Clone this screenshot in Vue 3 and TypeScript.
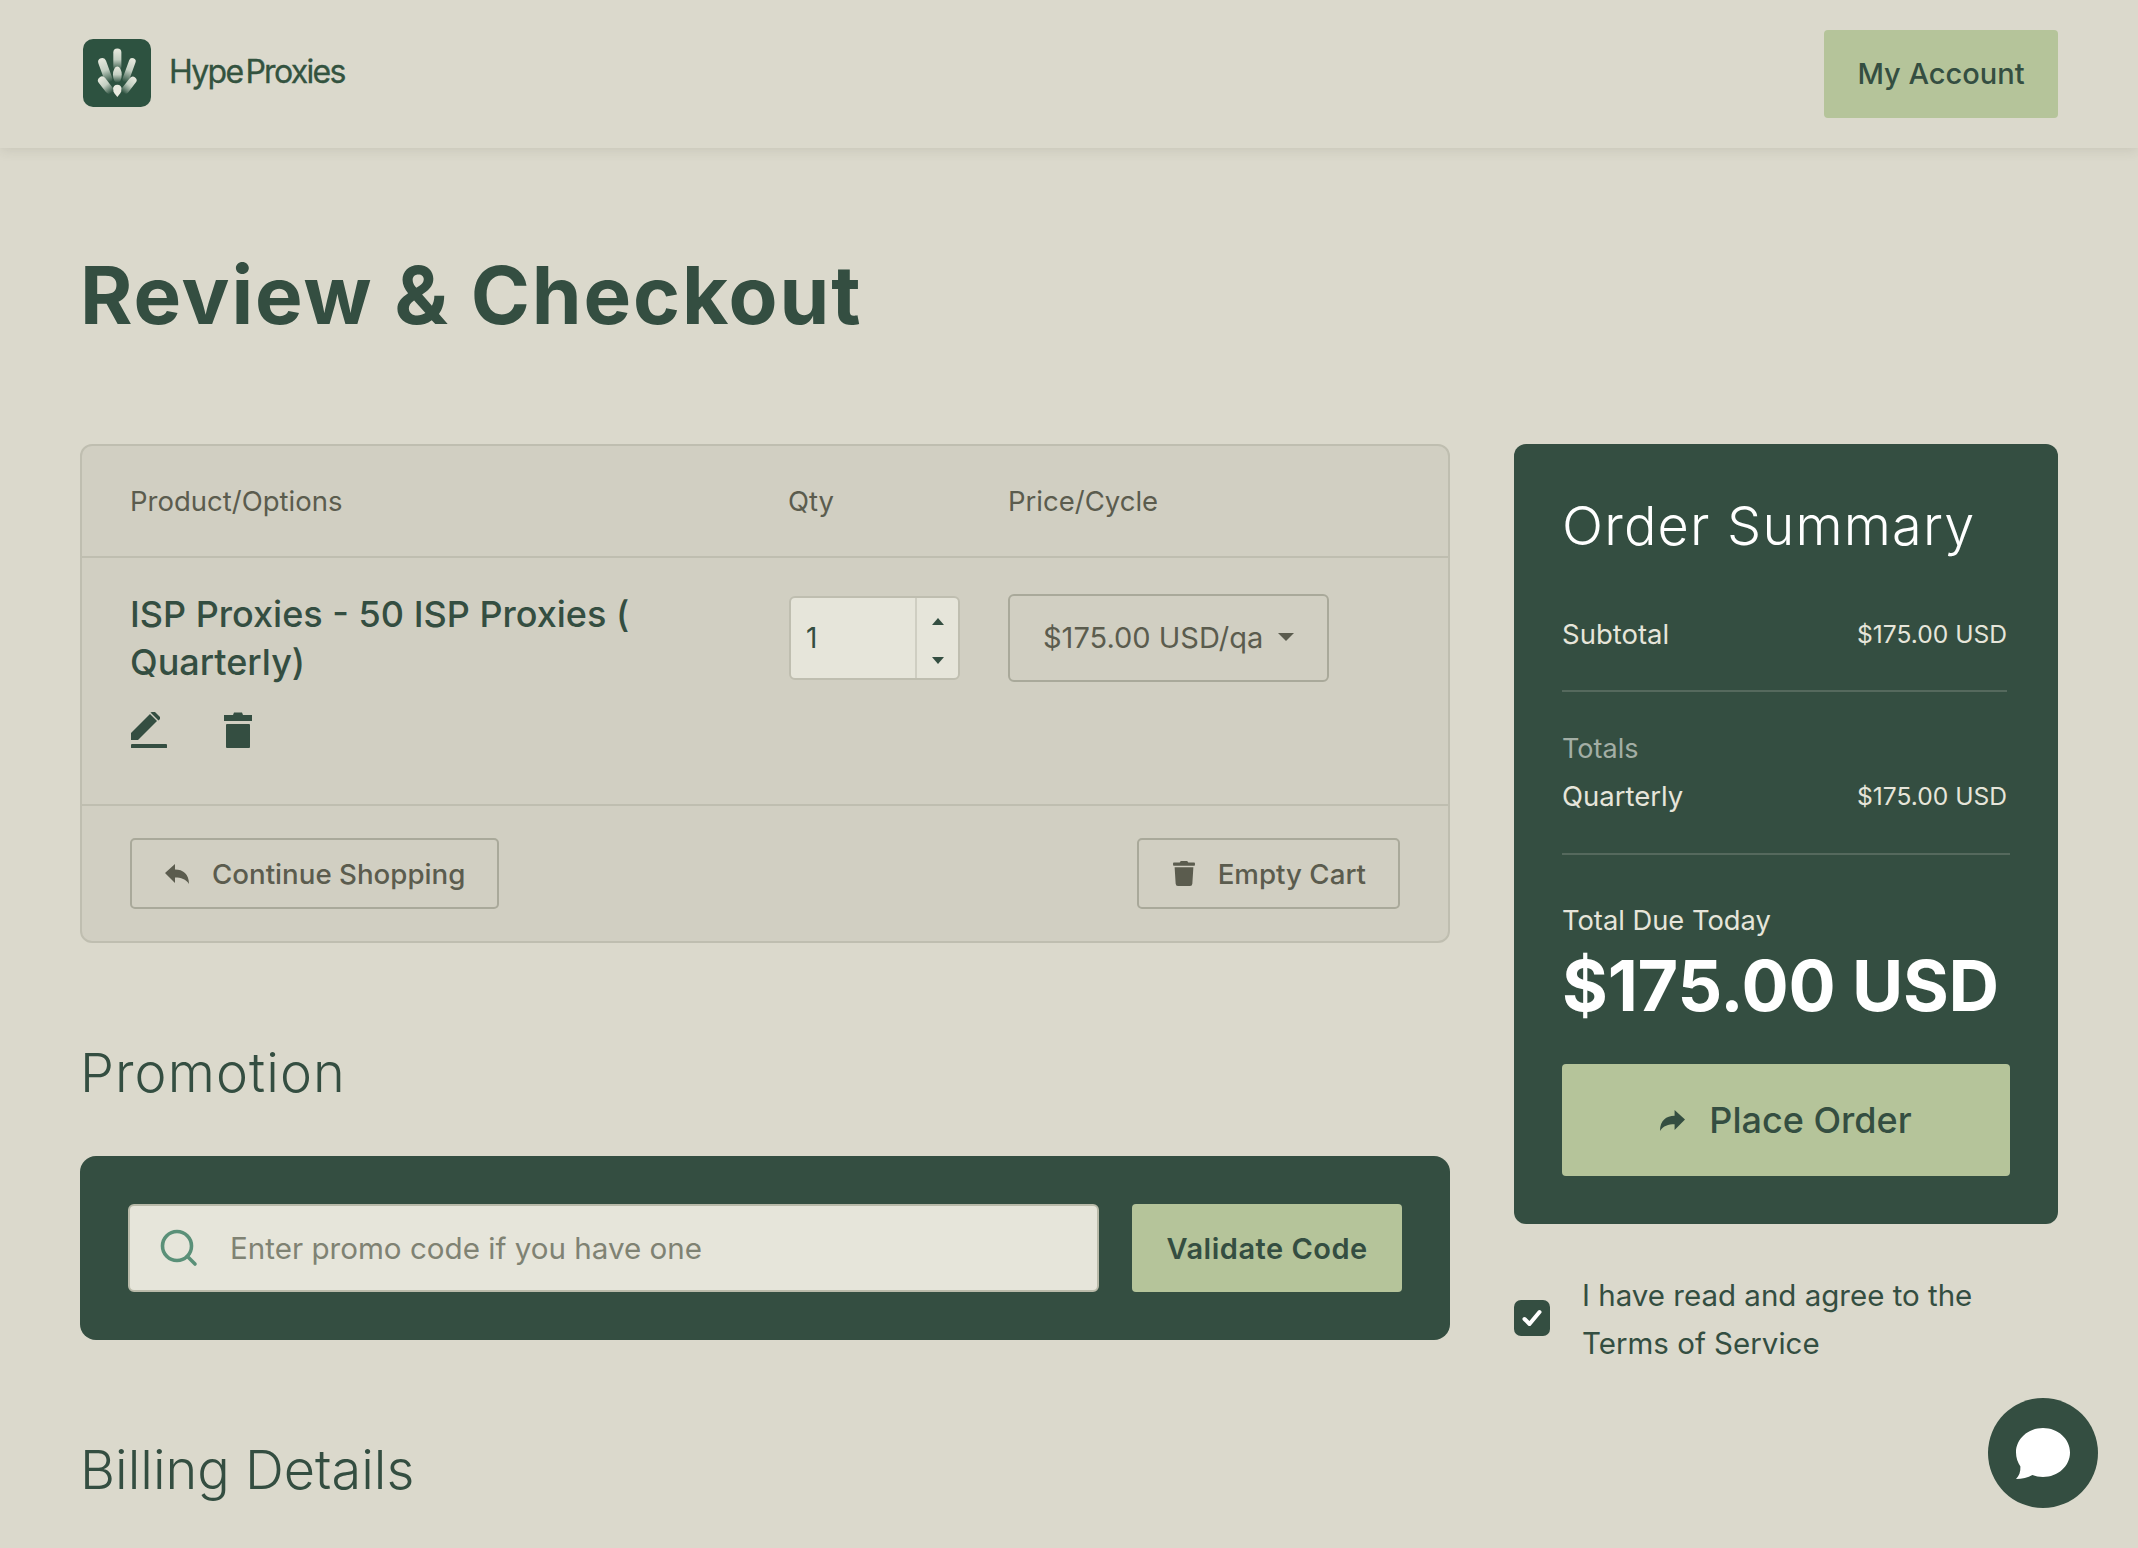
<template>
  <div class="page">
    <header class="topbar">
      <a class="brand" href="#">
        <svg class="brand-mark" viewBox="0 0 202 202">
          <defs>
            <linearGradient id="petal" x1="0" y1="0" x2="0" y2="1">
              <stop offset="0" stop-color="#e8eadf" />
              <stop offset="0.5" stop-color="#c3cfc2" />
              <stop offset="1" stop-color="#2d5240" />
            </linearGradient>
          </defs>
          <rect width="202" height="202" rx="30" fill="#2d5240" />
          <rect x="90" y="28" width="24" height="66" rx="12" fill="url(#petal)" />
          <ellipse cx="102" cy="106" rx="13" ry="24" fill="url(#petal)" />
          <path d="M102 136c8 0 13 6 13 13 0 9-8 17-13 23-5-6-13-14-13-23 0-7 5-13 13-13z" fill="#e8eadf" />
          <rect x="54" y="55" width="24" height="76" rx="12" fill="url(#petal)" transform="rotate(-20 66 93)" />
          <rect x="127" y="55" width="20" height="76" rx="10" fill="url(#petal)" transform="rotate(20 137 93)" />
          <rect x="55" y="108" width="24" height="58" rx="12" fill="url(#petal)" transform="rotate(-38 67 137)" />
          <rect x="126" y="108" width="22" height="58" rx="11" fill="url(#petal)" transform="rotate(38 137 137)" />
        </svg>
        <span class="brand-name">Hype<span class="brand-second">Proxies</span></span>
      </a>
      <button class="account-btn" type="button">My Account</button>
    </header>

    <main class="content">
      <h1 class="page-title">Review &amp; Checkout</h1>

      <div class="checkout">
        <div class="left-col">
          <section class="cart">
            <div class="cart-row cart-head">
              <span>Product/Options</span>
              <span>Qty</span>
              <span>Price/Cycle</span>
            </div>
            <div class="cart-row cart-item">
              <div class="item-info">
                <div class="item-name">ISP Proxies - 50 ISP Proxies (<br />Quarterly)</div>
                <div class="item-actions">
                  <svg class="icon-edit" viewBox="0 0 36 36" fill="#344e41">
                    <path d="M0 21 19 2l7 7L7 28H0z" />
                    <path d="M21 0h3l5 5v2l-1.500 1.500-8-8z" />
                    <rect y="32" width="36" height="4.300" rx="1" />
                  </svg>
                  <svg class="icon-bin" viewBox="0 0 28 36" fill="#344e41">
                    <path d="M0 3h9l1-2.500h8l1 2.500h9v6H0z" />
                    <rect x="2" y="12" width="24" height="24" rx="1" />
                  </svg>
                </div>
              </div>
              <div class="qty-field">
                <input class="qty-input" type="text" :value="qty" />
                <div class="qty-spin">
                  <svg viewBox="0 0 12 7" fill="#344e41"><path d="M6 0l6 7H0z" /></svg>
                  <svg viewBox="0 0 12 7" fill="#344e41"><path d="M6 7l6-7H0z" /></svg>
                </div>
              </div>
              <button class="cycle-select" type="button">
                <span>{{ price }}/qa</span>
                <svg viewBox="0 0 16 8" fill="#5b5c4e"><path d="M0 0h16L8 8z" /></svg>
              </button>
            </div>
            <div class="cart-foot">
              <button class="ghost-btn" type="button">
                <svg viewBox="0 0 24 20" class="ghost-icon"><path :d="replyPath" /></svg>
                Continue Shopping
              </button>
              <button class="ghost-btn empty-btn" type="button">
                <svg viewBox="0 0 448 512" class="bin-small"><path :d="binPath" /></svg>
                Empty Cart
              </button>
            </div>
          </section>

          <h2 class="section-title promo-title">Promotion</h2>
          <section class="promo">
            <div class="promo-field">
              <svg class="promo-search" viewBox="0 0 38 38" fill="none" stroke="#5a9078" stroke-width="3.600" stroke-linecap="round">
                <circle cx="17" cy="17" r="14.500" />
                <path d="M27.500 27.500 35 35" />
              </svg>
              <input class="promo-input" type="text" placeholder="Enter promo code if you have one" />
            </div>
            <button class="validate-btn" type="button">Validate Code</button>
          </section>

          <h2 class="section-title billing-title">Billing Details</h2>
        </div>

        <aside class="right-col">
          <section class="summary">
            <h2 class="summary-title">Order Summary</h2>
            <div class="sum-line subtotal">
              <span>Subtotal</span><span class="sum-amount">{{ price }}</span>
            </div>
            <hr class="sum-rule" />
            <div class="totals-label">Totals</div>
            <div class="sum-line">
              <span>Quarterly</span><span class="sum-amount">{{ price }}</span>
            </div>
            <hr class="sum-rule wide" />
            <div class="due-label">Total Due Today</div>
            <div class="due-amount">{{ price }}</div>
            <button class="place-btn" type="button">
              <svg viewBox="0 0 24 20" class="place-icon"><path :d="replyPath" transform="matrix(-1 0 0 1 24 0)" /></svg>
              Place Order
            </button>
          </section>
          <label class="terms">
            <span class="terms-box" :class="{ on: agreed }">
              <svg viewBox="0 0 20 18" fill="none" stroke="#fff" stroke-width="4" stroke-linecap="round" stroke-linejoin="round">
                <path d="M2.500 10l5 5L17.500 3" />
              </svg>
            </span>
            <span class="terms-text">I have read and agree to the<br />Terms of Service</span>
          </label>
        </aside>
      </div>
    </main>

    <button class="chat-btn" type="button" aria-label="Chat">
      <svg viewBox="0 0 54 51" fill="#fff">
        <path d="M27 0c15 0 27 11 27 24.500S42 49 27 49c-4 0-7.500-.7-10.600-2C12 49.500 6 51 0 51c3-3 4.700-7 4.400-12.500C1.700 34.500 0 29.700 0 24.500 0 11 12 0 27 0z" />
      </svg>
    </button>
  </div>
</template>

<script setup lang="ts">
import { ref } from 'vue'

const price = '$175.00 USD'
const qty = ref(1)
const agreed = ref(true)

const replyPath = 'M0 9 10 0v5.500C18 5.500 24 10 24 20c-3-5-8-6.500-14-6.500V19z'
const binPath =
  'M432 32H312l-9.400-18.700A24 24 0 0 0 281.100 0H166.800a23.720 23.720 0 0 0-21.400 13.300L136 32H16A16 16 0 0 0 0 48v32a16 16 0 0 0 16 16h416a16 16 0 0 0 16-16V48a16 16 0 0 0-16-16zM53.200 467a48 48 0 0 0 47.900 45h245.800a48 48 0 0 0 47.900-45L416 128H32z'
</script>

<style>
html,
body {
  margin: 0;
  background: #dbd9cc;
  overflow: hidden;
}
</style>

<style scoped>
.page {
  min-height: 1548px;
  background: #dbd9cc;
  color: #344e41;
  font-family: Inter, "Noto Sans", sans-serif;
}

/* top bar */
.topbar {
  display: flex;
  align-items: center;
  justify-content: space-between;
  height: 148px;
  padding: 0 80px 0 83px;
  box-shadow: 0 2px 12px rgba(60, 60, 40, 0.12);
}

.brand {
  display: flex;
  align-items: center;
  gap: 18px;
  margin-top: -2px;
  text-decoration: none;
}

.brand-mark {
  width: 68px;
  height: 68px;
}

.brand-name {
  margin-top: -3px;
  font-size: 32px;
  letter-spacing: -1.7px;
  color: #33533f;
  -webkit-text-stroke: 0.3px #33533f;
}

.brand-second {
  margin-left: 3px;
}

.account-btn {
  width: 234px;
  height: 88px;
  margin-top: -1px;
  border: 0;
  border-radius: 4px;
  background: #b5c49a;
  color: #344e41;
  font: 500 29px Inter, sans-serif;
}

/* page */
.content {
  padding: 0 80px;
}

.page-title {
  margin: 0;
  padding: 97px 0 99px;
  font-size: 80px;
  line-height: 100px;
  font-weight: 700;
  letter-spacing: 1.9px;
}

.checkout {
  display: grid;
  grid-template-columns: 1370px 544px;
  gap: 64px;
}

/* cart */
.cart {
  border: 2px solid #bfbeb0;
  border-radius: 12px;
  background: #d1cfc2;
  overflow: hidden;
}

.cart-row {
  display: grid;
  grid-template-columns: 658px 220px 1fr;
  padding: 0 48px;
}

.cart-head {
  align-items: center;
  height: 110px;
  border-bottom: 2px solid #bfbeb0;
  font-size: 27.500px;
  color: #5b5c4e;
}

.cart-item {
  height: 248px;
  padding-top: 25px;
  box-sizing: border-box;
  border-bottom: 2px solid #bfbeb0;
  align-items: start;
}

.item-name {
  font-size: 36px;
  line-height: 48px;
  font-weight: 500;
  margin-top: 7px;
}

.item-actions {
  display: flex;
  gap: 57px;
  margin-top: 26px;
  padding-left: 1px;
}

.icon-edit {
  width: 36px;
  height: 36px;
}

.icon-bin {
  width: 28px;
  height: 36px;
}

.qty-field {
  display: flex;
  width: 171px;
  height: 84px;
  margin: 13px 0 0 1px;
  border: 2px solid #bfbeb0;
  border-radius: 6px;
  background: #e6e5da;
  box-sizing: border-box;
  overflow: hidden;
}

.qty-input {
  flex: 1;
  min-width: 0;
  padding: 0 0 0 15px;
  border: 0;
  outline: 0;
  background: transparent;
  font: 400 28px Inter, sans-serif;
  color: #344e41;
}

.qty-spin {
  display: flex;
  flex-direction: column;
  align-items: center;
  justify-content: space-between;
  width: 43px;
  padding: 20px 0 14px;
  box-sizing: border-box;
  border-left: 2px solid #cfcec2;
}

.qty-spin svg {
  width: 12px;
  height: 7px;
}

.cycle-select {
  display: flex;
  align-items: center;
  justify-content: space-between;
  width: 321px;
  height: 88px;
  margin-top: 11px;
  padding: 0 33px 2px;
  box-sizing: border-box;
  border: 2px solid #a9a99a;
  border-radius: 6px;
  background: transparent;
  color: #5b5c4e;
  font: 400 29px Inter, sans-serif;
}

.cycle-select svg {
  width: 16px;
  height: 8px;
}

.cart-foot {
  display: flex;
  justify-content: space-between;
  padding: 32px 48px;
}

.ghost-btn {
  display: flex;
  align-items: center;
  gap: 23px;
  height: 71px;
  padding: 0 32px 0 33px;
  border: 2px solid #a9a99a;
  border-radius: 5px;
  background: transparent;
  color: #5b5c4e;
  font: 500 27.700px Inter, sans-serif;
}

.empty-btn {
  padding-left: 34px;
}

.ghost-icon {
  width: 24px;
  height: 20px;
  fill: #5b5c4e;
}

.bin-small {
  width: 22px;
  height: 25px;
  fill: #5b5c4e;
}

/* promo */
.section-title {
  margin: 0;
  font-size: 54px;
  line-height: 70px;
  font-weight: 300;
}

.promo-title {
  margin-top: 95px;
  letter-spacing: 1.1px;
}

.promo {
  display: flex;
  gap: 33px;
  margin-top: 48px;
  padding: 48px;
  border-radius: 16px;
  background: #344e41;
}

.promo-field {
  display: flex;
  align-items: center;
  gap: 30px;
  width: 972px;
  height: 88px;
  padding-left: 30px;
  box-sizing: border-box;
  border: 2px solid #b9baa9;
  border-radius: 6px;
  background: #e6e5da;
}

.promo-search {
  width: 38px;
  height: 38px;
  flex: none;
}

.promo-input {
  flex: 1;
  min-width: 0;
  border: 0;
  outline: 0;
  background: transparent;
  font: 400 29.600px Inter, sans-serif;
  color: #344e41;
}

.promo-input::placeholder {
  color: #7f8273;
  opacity: 1;
}

.validate-btn {
  width: 270px;
  height: 88px;
  border: 0;
  border-radius: 4px;
  background: #b5c49a;
  color: #344e41;
  font: 600 29px Inter, sans-serif;
  letter-spacing: 0.5px;
}

.billing-title {
  margin-top: 95px;
}

/* summary */
.summary {
  height: 780px;
  padding: 47px 48px 0;
  box-sizing: border-box;
  border-radius: 12px;
  background: #344e41;
  color: #e6e5da;
}

.summary-title {
  margin: 0;
  font-size: 54px;
  line-height: 70px;
  font-weight: 300;
  letter-spacing: 1.2px;
  color: #fff;
}

.sum-line {
  display: flex;
  justify-content: space-between;
  width: 445px;
  font-size: 27.500px;
  line-height: 48px;
}

.sum-amount {
  font-size: 24.600px;
}

.subtotal {
  margin-top: 49px;
}

.sum-rule {
  width: 445px;
  height: 2px;
  margin: 32px 0 0;
  border: 0;
  background: #55695d;
}

.sum-rule.wide {
  width: 448px;
  margin-top: 33px;
}

.totals-label {
  margin-top: 33px;
  font-size: 27px;
  line-height: 47px;
  color: #a3aea5;
}

.due-label {
  margin-top: 42px;
  font-size: 27.300px;
  line-height: 48px;
}

.due-amount {
  margin-top: -4px;
  font-size: 70px;
  line-height: 90px;
  font-weight: 700;
  letter-spacing: -0.2px;
  color: #fff;
  white-space: nowrap;
}

.place-btn {
  display: flex;
  align-items: center;
  justify-content: center;
  gap: 24px;
  width: 448px;
  height: 112px;
  margin-top: 33px;
  border: 0;
  border-radius: 4px;
  background: #b5c49a;
  color: #344e41;
  font: 500 36px Inter, sans-serif;
}

.place-icon {
  width: 25px;
  height: 21px;
  fill: #344e41;
}

.terms {
  display: flex;
  align-items: center;
  gap: 32px;
  margin-top: 47px;
  font-size: 29.500px;
  line-height: 48px;
}

.terms-box {
  display: flex;
  align-items: center;
  justify-content: center;
  width: 36px;
  height: 36px;
  margin-top: -2px;
  border-radius: 7px;
  background: #344e41;
  flex: none;
}

.terms-box svg {
  width: 20px;
  height: 18px;
}

/* chat bubble */
.chat-btn {
  position: fixed;
  left: 1988px;
  top: 1398px;
  display: flex;
  align-items: center;
  justify-content: center;
  width: 110px;
  height: 110px;
  padding: 0;
  border: 0;
  border-radius: 50%;
  background: #344e41;
}

.chat-btn svg {
  width: 54px;
  height: 51px;
}
</style>
